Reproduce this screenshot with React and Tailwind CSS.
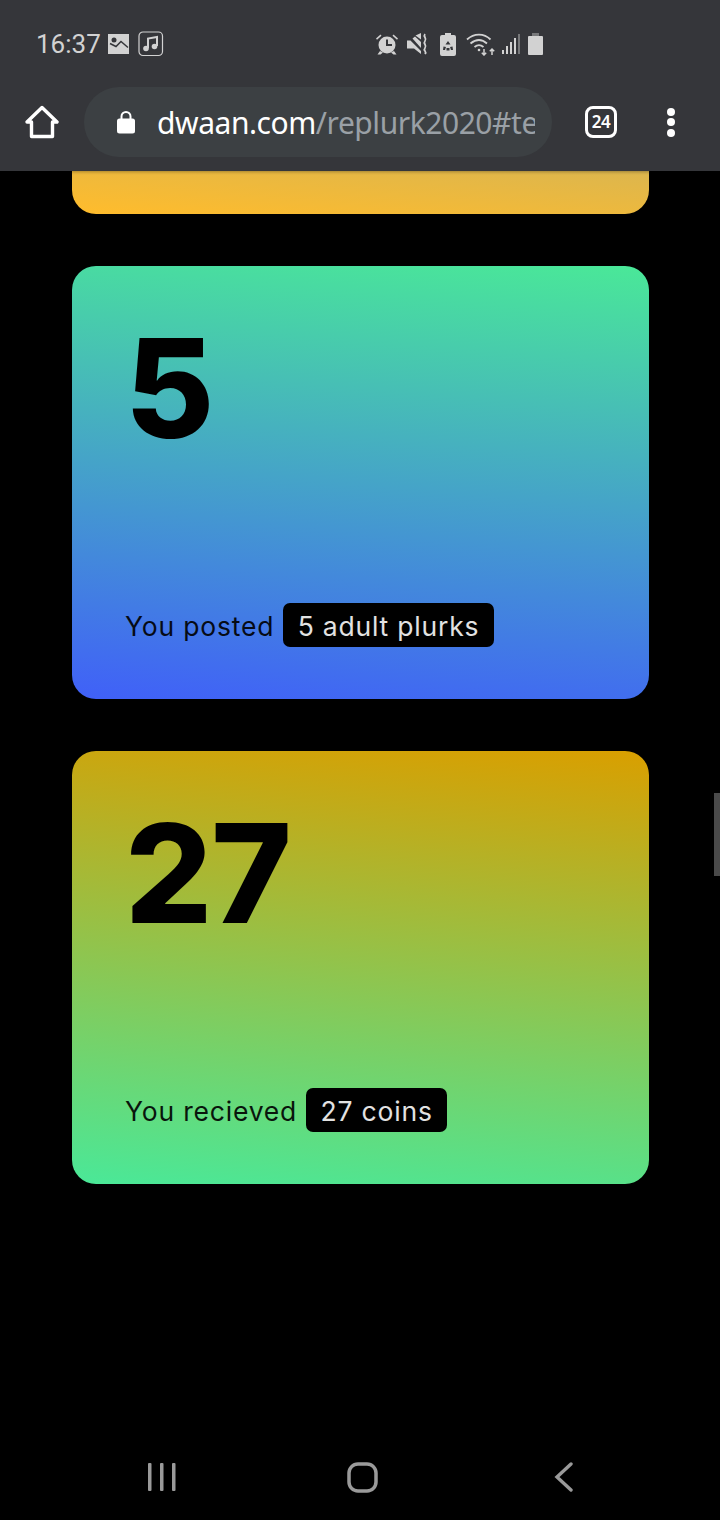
const sans = { fontFamily: "Inter, sans-serif" };

const StatusIcons = () => (
  <div className="flex items-center">
    {/* alarm */}
    <svg width="24" height="24" viewBox="0 0 24 24" fill="#d2d2d2">
      <circle cx="12" cy="13" r="8.500" />
      <path d="M1 6.500 5.500 2.500l1 1.200-4.500 4zM23 6.500 18.500 2.500l-1 1.200 4.500 4z" />
      <path d="M5 19l-2.500 3.500h3L8 20.500zM19 19l2.500 3.500h-3L16 20.500z" />
      <path d="M11 7.500h2V12h4v2h-6z" fill="#35363a" />
    </svg>
    {/* mute + vibrate */}
    <svg width="23" height="24" viewBox="0 0 23 24" className="ml-[7px]" fill="#d2d2d2">
      <path d="M1 8.500h3.500L15 19v3l-7-5.500H1z" />
      <path d="M6.500 6.500 9 4.500l6 5.500V16z" />
      <path d="M9.500 3.500 15 1v6.500z" />
      <path d="M19 2c-2.500 3 2.500 4 0 7s2.500 4 0 7 2.500 3 0 6" fill="none" stroke="#d2d2d2" strokeWidth="1.800" />
    </svg>
    {/* battery saver */}
    <svg width="16" height="23" viewBox="0 0 16 23" className="ml-[11px]">
      <path d="M5 0h6v2h3a2 2 0 0 1 2 2v17a2 2 0 0 1-2 2H2a2 2 0 0 1-2-2V4a2 2 0 0 1 2-2h3z" fill="#d2d2d2" />
      <path d="M8 8l2.500 3.500H5.500zM3.500 13.500l2.500.500-1 3H3zM12.500 13.500l-2.500.500 1 3h2zM6.500 15h3v2.500h-3z" fill="#35363a" />
    </svg>
    {/* wifi */}
    <svg width="30" height="24" viewBox="0 0 30 24" className="ml-[10px]" fill="none" stroke="#d2d2d2" strokeWidth="1.800">
      <path d="M1 7.500C8 1 18 1 24.500 7.500" />
      <path d="M4.500 11.500C10 7 16 7 21 11.500" />
      <path d="M8.500 15c3-2.500 6-2.500 9 0" />
      <circle cx="13" cy="18" r="1.300" fill="#d2d2d2" stroke="none" />
      <path d="M18 17v6M15.800 20.800 18 23l2.200-2.200M26 23v-6M23.800 19.200 26 17l2.200 2.200" strokeWidth="1.500" />
    </svg>
    {/* signal */}
    <svg width="18" height="20" viewBox="0 0 18 20" className="ml-[6px]">
      <path d="M0 16h2v4H0zM4 12h2v8H4zM8 8h2v12H8zM12 4h2v16h-2z" fill="#d2d2d2" />
      <path d="M16 0h2v20h-2z" fill="#77787a" />
    </svg>
    {/* battery */}
    <svg width="15" height="22" viewBox="0 0 15 22" className="ml-[8px]">
      <path d="M4 0h7v3H4z" fill="#77787a" />
      <rect y="3" width="15" height="19" rx="1" fill="#d2d2d2" />
    </svg>
  </div>
);

const Card = ({ num, label, tag, gradient }) => (
  <div className={`h-[433px] w-[577px] rounded-[24px] pl-[53px] flex flex-col text-black ${gradient}`}>
    <div className="mt-[35px] text-[137px] leading-[174px] font-extrabold tracking-[-1px]">{num}</div>
    <div className="mt-auto mb-[50px] flex items-start text-[26.500px] leading-[46px] tracking-[0.8px]">
      <span className="opacity-90">{label}</span>
      <span className="ml-[9px] h-[44px] rounded-[7px] bg-black px-[14.500px] text-[#e2e2e2]">{tag}</span>
    </div>
  </div>
);

const App = () => {
  return (
    <div className="relative flex h-[1520px] w-[720px] flex-col overflow-hidden bg-black" style={sans}>
      {/* Browser chrome */}
      <header className="z-10 h-[171px] shrink-0 bg-[#35363a] shadow-[0_1px_3px_rgba(0,0,0,0.3)]">
        <div className="flex h-[87px] items-center pl-[36px] pr-[177px] pt-[1px]">
          <span className="text-[26px] leading-none text-[#d2d2d2]" style={{ fontFamily: "Roboto, sans-serif" }}>16:37</span>
          <svg width="21" height="20" viewBox="0 0 21 20" className="ml-[7px]">
            <rect width="21" height="20" fill="#d2d2d2" />
            <circle cx="6" cy="6" r="2.500" fill="#35363a" />
            <path d="M2 9.500l6 3 5-5 7 6" fill="none" stroke="#35363a" strokeWidth="1.500" />
          </svg>
          <svg width="26" height="26" viewBox="0 0 26 26" className="ml-[9px]" fill="none">
            <rect x="1" y="1" width="23.500" height="23.500" rx="4" stroke="#d2d2d2" strokeWidth="1.200" />
            <path d="M10 17V7.500l9-1.500v9" stroke="#d2d2d2" strokeWidth="2" />
            <circle cx="8" cy="17.500" r="2.800" fill="#d2d2d2" />
            <circle cx="16.500" cy="15.500" r="2.800" fill="#d2d2d2" />
          </svg>
          <div className="ml-auto"><StatusIcons /></div>
        </div>
        <div className="flex h-[70px] items-center">
          <svg width="34" height="34" viewBox="0 0 34 34" className="ml-[25px]" fill="none" stroke="#fff" strokeWidth="3.400" strokeLinejoin="round">
            <path d="M2 17 17 2.500 32 17h-4.500v14.500h-21V17z" />
          </svg>
          <div className="ml-[25px] flex h-[70px] w-[468px] items-center rounded-[35px] bg-[#3c4043] pl-[33px]">
            <svg width="18" height="24" viewBox="0 0 18 24">
              <path d="M4.500 10V6.500a4.500 4.500 0 0 1 9 0V10" fill="none" stroke="#fff" strokeWidth="2" />
              <rect y="8.500" width="18" height="15" rx="2.500" fill="#fff" />
            </svg>
            <div className="ml-[22px] w-[378px] overflow-hidden whitespace-nowrap text-[30px] leading-[73px] tracking-[-0.45px] text-[#9aa0a6]" style={{ fontFamily: '"Noto Sans", sans-serif' }}>
              <span className="text-white">dwaan.com</span>/replurk2020#text
            </div>
          </div>
          <div className="ml-[33px] flex h-[32px] w-[32px] items-center justify-center rounded-[8px] border-[3px] border-white text-[17px] font-semibold tracking-[-0.5px] text-white" style={{ fontFamily: '"Noto Sans", sans-serif' }}>
            24
          </div>
          <div className="ml-[50px] flex flex-col gap-[2.500px]">
            <span className="h-[8px] w-[8px] rounded-full bg-white" />
            <span className="h-[8px] w-[8px] rounded-full bg-white" />
            <span className="h-[8px] w-[8px] rounded-full bg-white" />
          </div>
        </div>
      </header>

      {/* Cards */}
      <main className="flex flex-col gap-[52px] pl-[72px]">
        <div className="h-[43px] w-[577px] rounded-b-[24px] bg-[linear-gradient(185deg,#dcb64e_0%,#ffbc2c_100%)]" />
        <Card
          num="5"
          label="You posted"
          tag="5 adult plurks"
          gradient="bg-[linear-gradient(185deg,#4ae898_0%,#4060f8_100%)]"
        />
        <Card
          num="27"
          label="You recieved"
          tag="27 coins"
          gradient="bg-[linear-gradient(185deg,#d99f00_0%,#4ae898_100%)]"
        />
      </main>

      {/* Scrollbar thumb */}
      <div className="absolute right-0 top-[793px] h-[83px] w-[6px] bg-[#4a4a4a]" />

      {/* Android nav */}
      <nav className="mt-auto flex h-[87px] items-start pt-[29px]">
        <svg width="30" height="30" viewBox="0 0 30 30" className="ml-[147px]" fill="#9a9a9a">
          <rect x="1" y="1" width="3.500" height="28" rx="1" />
          <rect x="13" y="1" width="3.500" height="28" rx="1" />
          <rect x="25" y="1" width="3.500" height="28" rx="1" />
        </svg>
        <svg width="32" height="32" viewBox="0 0 32 32" className="ml-[170px]" fill="none" stroke="#9a9a9a" strokeWidth="3.500">
          <rect x="2" y="2" width="27" height="27" rx="9" />
        </svg>
        <svg width="20" height="30" viewBox="0 0 20 30" className="ml-[175px]" fill="none" stroke="#9a9a9a" strokeWidth="3.400" strokeLinecap="round">
          <path d="M17 2 3 15l14 13" />
        </svg>
      </nav>
    </div>
  );
};

export default App;
